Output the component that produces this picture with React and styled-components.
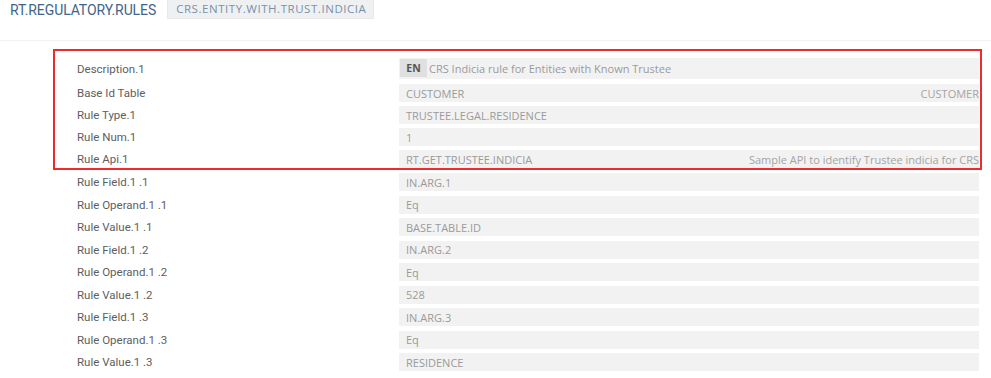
import React from "react";
import styled, { createGlobalStyle } from "styled-components";

const Global = createGlobalStyle`
  html, body { margin: 0; padding: 0; background: #ffffff; }
  body { font-family: "Open Sans", "Noto Sans", sans-serif; }
`;

const Page = styled.div`
  width: 991px;
  height: 378px;
  overflow: hidden;
  background: #fff;
`;

const TabBar = styled.div`
  display: flex;
  align-items: flex-start;
  gap: 11px;
  height: 40px;
  padding-left: 10px;
  border-bottom: 1px solid #f3f3f3;
  box-shadow: 0 1px 2px rgba(0, 0, 0, 0.02);
`;

const Tab = styled.div`
  font-family: ${(p) => (p.$active ? '"Open Sans", "Noto Sans", sans-serif' : 'Roboto, "Liberation Sans", sans-serif')};
  font-size: ${(p) => (p.$active ? "11.5px" : "14px")};
  letter-spacing: ${(p) => (p.$active ? "0.55px" : "-0.1px")};
  line-height: 18px;
  height: 18px;
  padding: ${(p) => (p.$active ? "0 7px 0 8px" : "1px 0 0")};
  color: ${(p) => (p.$active ? "#7a90aa" : "#41648a")};
  background: ${(p) => (p.$active ? "#eef0f2" : "transparent")};
  border: ${(p) => (p.$active ? "1px solid #e6e8ea" : "none")};
  border-top: none;
  white-space: nowrap;
`;

const Form = styled.div`
  padding: 8px 12px 0 55px;
`;

const Highlight = styled.div`
  margin: 0 -3px 3px -2px;
  border: 2px solid #f02a2a;
  padding: 7px 0 0 0;
  display: flex;
  flex-direction: column;
  gap: 4px;
`;

const Rows = styled.div`
  display: flex;
  flex-direction: column;
  gap: 4.5px;
`;

const Row = styled.div`
  display: flex;
  align-items: center;
  height: ${(p) => (p.$tall ? "21px" : "18px")};
  margin-bottom: ${(p) => (p.$tall ? "1px" : "0")};
`;

const Label = styled.div`
  width: 344px;
  padding-left: 22px;
  flex-shrink: 0;
  box-sizing: border-box;
  font-family: Roboto, "Liberation Sans", sans-serif;
  font-size: 11.5px;
  color: #5e5e5e;
  white-space: nowrap;
`;

const Field = styled.div`
  flex: 1;
  height: 100%;
  display: flex;
  align-items: center;
  justify-content: space-between;
  background: #f2f2f2;
  margin-right: ${(p) => (p.$inBox ? "1px" : "0")};
  padding: 0 0 0 ${(p) => (p.$badge ? "1px" : "7px")};
  font-family: "Open Sans", "Noto Sans", sans-serif;
  font-size: 11px;
  color: #9a9a9a;
  white-space: nowrap;
  overflow: hidden;
`;

const Badge = styled.span`
  display: inline-flex;
  align-items: center;
  justify-content: center;
  width: 27px;
  height: 18px;
  background: #e0e0e0;
  color: #555;
  font-weight: 700;
  font-size: 10.5px;
  margin-right: 2px;
  margin-top: -2px;
`;

const Left = styled.span`
  display: inline-flex;
  align-items: center;
`;

const Right = styled.span`
  color: #a4a4a4;
`;

const boxed = [
  { label: "Description.1", value: "CRS Indicia rule for Entities with Known Trustee", badge: "EN" },
  { label: "Base Id Table", value: "CUSTOMER", right: "CUSTOMER" },
  { label: "Rule Type.1", value: "TRUSTEE.LEGAL.RESIDENCE" },
  { label: "Rule Num.1", value: "1" },
  { label: "Rule Api.1", value: "RT.GET.TRUSTEE.INDICIA", right: "Sample API to identify Trustee indicia for CRS" },
];

const rest = [
  { label: "Rule Field.1 .1", value: "IN.ARG.1" },
  { label: "Rule Operand.1 .1", value: "Eq" },
  { label: "Rule Value.1 .1", value: "BASE.TABLE.ID" },
  { label: "Rule Field.1 .2", value: "IN.ARG.2" },
  { label: "Rule Operand.1 .2", value: "Eq" },
  { label: "Rule Value.1 .2", value: "528" },
  { label: "Rule Field.1 .3", value: "IN.ARG.3" },
  { label: "Rule Operand.1 .3", value: "Eq" },
  { label: "Rule Value.1 .3", value: "RESIDENCE" },
];

function FormRow({ item, inBox }) {
  return (
    <Row $tall={!!item.badge}>
      <Label>{item.label}</Label>
      <Field $inBox={inBox} $badge={!!item.badge}>
        <Left>
          {item.badge && <Badge>{item.badge}</Badge>}
          {item.value}
        </Left>
        {item.right && <Right>{item.right}</Right>}
      </Field>
    </Row>
  );
}

export default function App() {
  return (
    <Page>
      <Global />
      <TabBar>
        <Tab>RT.REGULATORY.RULES</Tab>
        <Tab $active>CRS.ENTITY.WITH.TRUST.INDICIA</Tab>
      </TabBar>
      <Form>
        <Highlight>
          {boxed.map((item) => (
            <FormRow key={item.label} item={item} inBox />
          ))}
        </Highlight>
        <Rows>
          {rest.map((item) => (
            <FormRow key={item.label} item={item} />
          ))}
        </Rows>
      </Form>
    </Page>
  );
}
